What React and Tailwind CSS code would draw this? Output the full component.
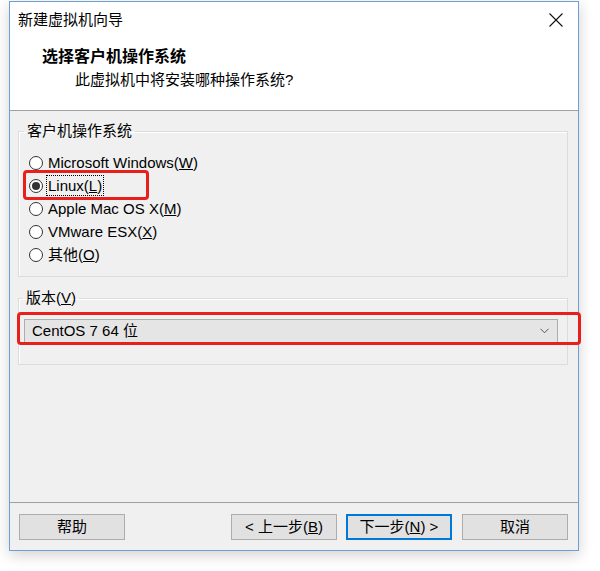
const FONT = { fontFamily: '"Liberation Sans", "Noto Sans CJK SC", sans-serif' };

function Radio({ checked, children, focused }) {
  return (
    <div className="flex items-center h-[23px] relative">
      <span className="w-[14px] h-[14px] rounded-full border border-[#333333] bg-white flex items-center justify-center shrink-0">
        {checked && <span className="w-[8px] h-[8px] rounded-full bg-[#333333]" />}
      </span>
      <span
        className={
          "leading-[19px] text-[#000000] " +
          (focused ? "ml-[4px] px-[1px] outline-1 outline-dotted outline-black" : "ml-[5px]")
        }
      >
        {children}
      </span>
    </div>
  );
}

function Button({ children, primary }) {
  return (
    <button
      type="button"
      className={
        "w-[106px] h-[26px] bg-[#e1e1e1] text-[15px] text-black flex items-center justify-center " +
        (primary ? "border-2 border-[#0078d7]" : "border border-[#adadad]")
      }
    >
      {children}
    </button>
  );
}

export default function App() {
  return (
    <div className="w-[600px] h-[571px] bg-white pt-[1px] pl-[9px]" style={FONT}>
      <div className="w-[570px] h-[550px] border border-[#6d9fd3] bg-white flex flex-col shadow-[0_4px_14px_rgba(0,0,0,0.18)] text-[15px]">
        {/* title bar */}
        <div className="h-[36px] flex items-center justify-between pl-[8px] pr-[12px] shrink-0">
          <span className="text-black">新建虚拟机向导</span>
          <svg width="16" height="16" viewBox="0 0 16 16" className="mr-[2px]">
            <path d="M1.5 1.5 L14.5 14.5 M14.5 1.5 L1.5 14.5" stroke="#111" strokeWidth="1.1" fill="none" />
          </svg>
        </div>
        {/* header */}
        <div className="h-[72px] pt-[8px] pl-[32px] shrink-0">
          <div className="text-[16px] font-bold leading-[22px] text-black">选择客户机操作系统</div>
          <div className="pl-[33px] mt-[2px] leading-[20px] text-black">此虚拟机中将安装哪种操作系统?</div>
        </div>
        <div className="h-px bg-[#a0a0a0] shrink-0" />
        {/* content */}
        <div className="flex-1 bg-[#f0f0f0] flex flex-col">
          <div className="flex-1 pt-[10px] pl-[8px] pr-[10px]">
            <fieldset className="border border-[#dcdcdc] shadow-[inset_1px_1px_0_#ffffff] px-[10px] pb-[10px]">
              <legend className="-ml-[5px] px-[3px] leading-[20px] text-black">客户机操作系统</legend>
              <div className="pt-[10px]">
                <Radio>
                  Microsoft Windows(<span className="underline">W</span>)
                </Radio>
                <div className="relative">
                  <Radio checked focused>
                    Linux(<span className="underline">L</span>)
                  </Radio>
                  <div className="absolute -left-[6px] -top-[4px] w-[126px] h-[30px] border-[3px] border-[#e8201c] rounded-[4px]" />
                </div>
                <Radio>
                  Apple Mac OS X(<span className="underline">M</span>)
                </Radio>
                <Radio>
                  VMware ESX(<span className="underline">X</span>)
                </Radio>
                <Radio>
                  其他(<span className="underline">O</span>)
                </Radio>
              </div>
            </fieldset>
            <fieldset className="mt-[11px] border border-[#dcdcdc] shadow-[inset_1px_1px_0_#ffffff] pl-[5px] pr-[9px] pb-[21px]">
              <legend className="-ml-[1px] px-[3px] leading-[20px] text-black">
                版本(<span className="underline">V</span>)
              </legend>
              <div className="relative mt-[11px]">
                <div className="h-[24px] bg-[#e5e5e5] border border-[#adadad] flex items-center justify-between pl-[7px] pr-[8px]">
                  <span className="text-black leading-[20px]">CentOS 7 64 位</span>
                  <svg width="9" height="6" viewBox="0 0 9 6">
                    <path d="M0.5 0.8 L4.5 4.8 L8.5 0.8" stroke="#555" strokeWidth="1" fill="none" />
                  </svg>
                </div>
                <div className="absolute -left-[7px] -top-[7px] -right-[23px] -bottom-[2px] border-[3px] border-[#e8201c] rounded-[4px]" />
              </div>
            </fieldset>
          </div>
          <div className="h-px bg-[#a0a0a0]" />
          <div className="h-[47px] pt-[11px] pl-[9px] pr-[10px] flex items-start">
            <Button>帮助</Button>
            <div className="flex-1" />
            <Button>
              &lt; 上一步(<span className="underline">B</span>)
            </Button>
            <div className="w-[9px]" />
            <Button primary>
              下一步(<span className="underline">N</span>) &gt;
            </Button>
            <div className="w-[10px]" />
            <Button>取消</Button>
          </div>
        </div>
      </div>
    </div>
  );
}
